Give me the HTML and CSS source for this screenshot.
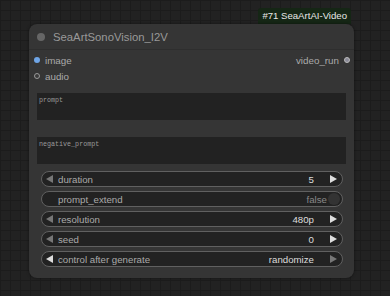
FILE: index.html
```html
<!DOCTYPE html>
<html lang="en">
<head>
  <meta charset="UTF-8" />
  <meta name="viewport" content="width=device-width, initial-scale=1" />
  <title>SeaArtSonoVision_I2V</title>
  <link rel="stylesheet" href="styles.css">
</head>
<body>
  <div class="wrap">
    <!-- Badge above the node -->
    <div class="badge">#71 SeaArtAI-Video</div>

    <div class="node">
      <div class="node-title">
        <span class="title-dot"></span>
        <span class="title-text">SeaArtSonoVision_I2V</span>
      </div>

      <!-- Inputs / outputs -->
      <div class="slots">
        <div class="slot-row">
          <div class="slot in"><span class="dot dot-image"></span>image</div>
          <div class="slot out">video_run<span class="dot dot-out"></span></div>
        </div>
        <div class="slot-row">
          <div class="slot in"><span class="dot dot-audio"></span>audio</div>
        </div>
      </div>

      <div class="text-box first">prompt</div>
      <div class="text-box second">negative_prompt</div>

      <!-- Widgets -->
      <div class="widgets">
        <div class="widget">
          <span class="arrow left dim"></span>
          <span class="w-label">duration</span>
          <span class="w-value">5</span>
          <span class="arrow right bright"></span>
        </div>
        <div class="widget toggle">
          <span class="w-label">prompt_extend</span>
          <span class="w-value off">false</span>
          <span class="knob"></span>
        </div>
        <div class="widget">
          <span class="arrow left dim"></span>
          <span class="w-label">resolution</span>
          <span class="w-value">480p</span>
          <span class="arrow right bright"></span>
        </div>
        <div class="widget">
          <span class="arrow left dim"></span>
          <span class="w-label">seed</span>
          <span class="w-value">0</span>
          <span class="arrow right bright"></span>
        </div>
        <div class="widget">
          <span class="arrow left bright"></span>
          <span class="w-label">control after generate</span>
          <span class="w-value">randomize</span>
          <span class="arrow right dim"></span>
        </div>
      </div>
    </div>
  </div>
</body>
</html>
```

FILE: styles.css
```css
* { box-sizing: border-box; }
body {
  margin: 0;
  padding: 8px 0 0 29px;
  height: 296px;
  overflow: hidden;
  font-family: "Liberation Sans", Arial, sans-serif;
  background-color: #222;
  background-image:
    linear-gradient(#1c1c1c 1px, transparent 1px),
    linear-gradient(90deg, #1c1c1c 1px, transparent 1px);
  background-size: 10px 10px;
}
.wrap {
  width: 325px;
  display: flex;
  flex-direction: column;
}
.badge {
  align-self: flex-end;
  margin-right: 3px;
  height: 16px;
  line-height: 16px;
  padding: 0 4px;
  font-size: 9.6px;
  color: #e8e8e8;
  background: #152615;
  border-radius: 3px 3px 0 0;
}
.node {
  height: 254px;
  background: #353535;
  border-radius: 8px;
  box-shadow: 0 0 3px rgba(0, 0, 0, 0.5);
  display: flex;
  flex-direction: column;
}
.node-title {
  height: 26px;
  display: flex;
  align-items: center;
  padding-left: 8px;
  border-bottom: 1px solid #2e2e2e;
}
.title-dot {
  width: 8px;
  height: 8px;
  border-radius: 50%;
  background: #666;
}
.title-text {
  margin-left: 8px;
  font-size: 11.3px;
  color: #999;
}
.slots {
  padding-top: 2px;
}
.slot-row {
  height: 16px;
  display: flex;
  align-items: center;
  justify-content: space-between;
}
.slot {
  display: flex;
  align-items: center;
  font-size: 9.8px;
  color: #aaa;
}
.slot.in { padding-left: 5px; }
.slot.out { padding-right: 4px; }
.dot {
  width: 6px;
  height: 6px;
  border-radius: 50%;
}
.slot.in .dot { margin-right: 5px; }
.slot.out .dot { margin-left: 5px; }
.dot-image { background: #6fa5e6; }
.dot-audio {
  background: #3a3a3a;
  border: 1.5px solid #9a9a9a;
}
.dot-out {
  background: #8a8a98;
  border: 1px solid #bbb;
}
.text-box {
  margin: 0 8px;
  height: 27px;
  background: #222;
  padding: 3px 2px;
  font-family: "Liberation Mono", "Courier New", monospace;
  font-size: 6.7px;
  color: #999;
}
.text-box.first { margin-top: 9px; }
.text-box.second { margin-top: 17px; }
.widgets {
  margin: 7px 11px 0 12px;
  display: flex;
  flex-direction: column;
  gap: 4px;
}
.widget {
  height: 16px;
  border: 1px solid #606060;
  border-radius: 8px;
  background: #222;
  display: flex;
  align-items: center;
  padding: 0 5px 0 4px;
  font-size: 9.7px;
}
.arrow {
  width: 0;
  height: 0;
  border-top: 4px solid transparent;
  border-bottom: 4px solid transparent;
}
.arrow.left { border-right: 7px solid #777; }
.arrow.right { border-left: 7px solid #777; }
.arrow.left.bright { border-right-color: #ddd; }
.arrow.right.bright { border-left-color: #ddd; }
.w-label {
  margin-left: 5px;
  color: #aaa;
  flex: 1;
}
.w-value {
  color: #ddd;
  margin-right: 16px;
}
.widget.toggle { padding-left: 11px; padding-right: 2px; }
.w-value.off {
  color: #888;
  margin-right: 1px;
}
.knob {
  width: 12px;
  height: 12px;
  border-radius: 50%;
  background: #333;
}
```
